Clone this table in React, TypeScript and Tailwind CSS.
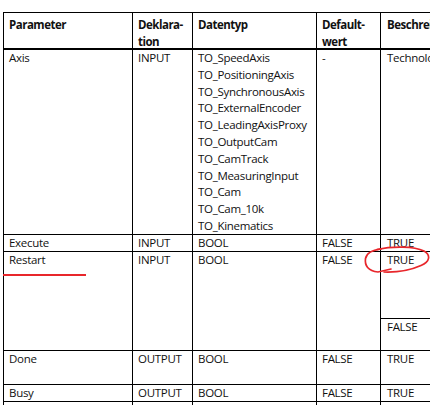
import React from "react";

const font = { fontFamily: "'Open Sans', 'Noto Sans', 'Liberation Sans', sans-serif" };

function Row({
  cells,
  h,
  bottom = "border-b",
  header = false,
}: {
  cells: React.ReactNode[];
  h: string;
  bottom?: string;
  header?: boolean;
}) {
  const widths = ["w-[129px]", "w-[60px]", "w-[124px]", "w-[64px]", "w-[200px]"];
  return (
    <div className={`flex border-black ${bottom} ${h}`}>
      {cells.map((c, i) => (
        <div
          key={i}
          className={`${widths[i]} shrink-0 border-l border-black ${
            header
              ? "pl-[5px] pt-[4px] font-bold leading-[16.5px] tracking-[-0.5px]"
              : "pl-[5px] leading-[16.8px]"
          }`}
        >
          {c}
        </div>
      ))}
    </div>
  );
}

export default function App() {
  const types = [
    "TO_SpeedAxis",
    "TO_PositioningAxis",
    "TO_SynchronousAxis",
    "TO_ExternalEncoder",
    "TO_LeadingAxisProxy",
    "TO_OutputCam",
    "TO_CamTrack",
    "TO_MeasuringInput",
    "TO_Cam",
    "TO_Cam_10k",
    "TO_Kinematics",
  ];
  return (
    <div
      className="relative w-[430px] h-[405px] overflow-hidden bg-white text-[11.5px] tracking-[-0.3px] text-[#111]"
      style={font}
    >
      <div className="pl-[3px] pt-[12px]">
        <div className="w-[600px] border-t border-black">
          <Row
            header
            h="h-[37px]"
            bottom="border-b-2"
            cells={[
              "Parameter",
              <>Deklara-<br />tion</>,
              "Datentyp",
              <>Default-<br />wert</>,
              <span className="pl-[1px] whitespace-nowrap">Beschreibung</span>,
            ]}
          />
          <Row
            h="h-[185px]"
            cells={[
              "Axis",
              "INPUT",
              <div>
                {types.map((t) => (
                  <div key={t}>{t}</div>
                ))}
              </div>,
              "-",
              <span className="pl-[1px] whitespace-nowrap">Technologieobjekt</span>,
            ]}
          />
          <Row h="h-[17px]" cells={["Execute", "INPUT", "BOOL", "FALSE", <span className="pl-[1px]">TRUE</span>]} />
          <div className="flex border-b border-black h-[99px]">
            <div className="w-[129px] shrink-0 border-l border-black pl-[5px] leading-[16.8px]">Restart</div>
            <div className="w-[60px] shrink-0 border-l border-black pl-[5px] leading-[16.8px]">INPUT</div>
            <div className="w-[124px] shrink-0 border-l border-black pl-[5px] leading-[16.8px]">BOOL</div>
            <div className="w-[64px] shrink-0 border-l border-black pl-[5px] leading-[16.8px]">FALSE</div>
            <div className="w-[200px] shrink-0 border-l border-black leading-[16.8px] flex flex-col">
              <div className="h-[67px] border-b border-black pl-[6px]">TRUE</div>
              <div className="pl-[6px]">FALSE</div>
            </div>
          </div>
          <Row h="h-[34px]" cells={["Done", "OUTPUT", "BOOL", "FALSE", <span className="pl-[1px]">TRUE</span>]} />
          <Row h="h-[17px]" cells={["Busy", "OUTPUT", "BOOL", "FALSE", <span className="pl-[1px]">TRUE</span>]} />
          <Row h="h-[20px]" bottom="" cells={["", "", "", "", ""]} />
        </div>
      </div>

      <div className="absolute left-[3px] top-[274px] h-[2px] w-[83px] bg-[#e8262b]" />
      <svg
        className="absolute left-0 top-0"
        width="430"
        height="405"
        viewBox="0 0 430 405"
        fill="none"
      >
        <path
          d="M381 249 C373 250 366.5 253 365.5 258.5 C364.5 265.5 368 271 378 272 L391 269"
          stroke="#e8262b"
          strokeWidth="1.7"
          strokeLinecap="round"
        />
        <path
          d="M377 249.5 C392 246 414 246 424 251 C431 255 430 262 421 265.5 C412 269.5 398 272.5 384 272"
          stroke="#e8262b"
          strokeWidth="1.7"
          strokeLinecap="round"
        />
      </svg>
    </div>
  );
}
